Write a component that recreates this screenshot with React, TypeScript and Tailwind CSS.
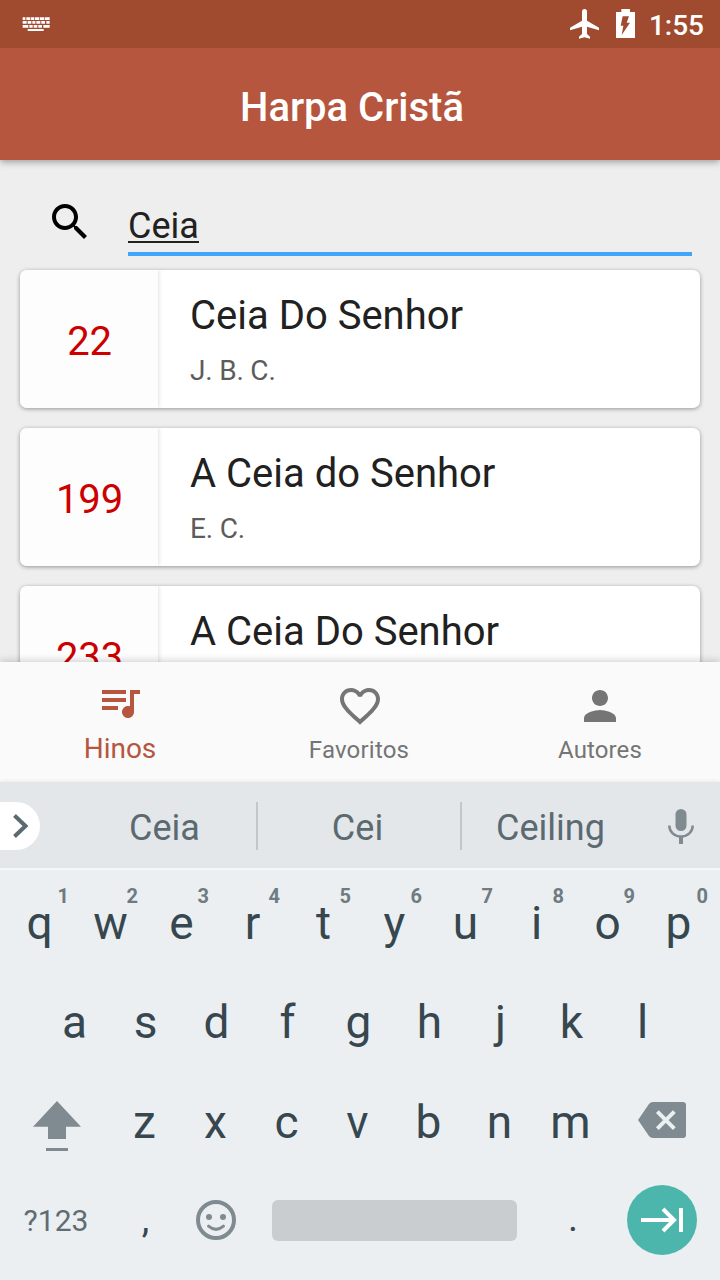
interface Hymn {
  number: number
  title: string
  author?: string
}

const HYMNS: Hymn[] = [
  { number: 22, title: 'Ceia Do Senhor', author: 'J. B. C.' },
  { number: 199, title: 'A Ceia do Senhor', author: 'E. C.' },
  { number: 233, title: 'A Ceia Do Senhor' },
]

const TOP_ROW = ['q', 'w', 'e', 'r', 't', 'y', 'u', 'i', 'o', 'p']
const MIDDLE_ROW = ['a', 's', 'd', 'f', 'g', 'h', 'j', 'k', 'l']
const BOTTOM_ROW = ['z', 'x', 'c', 'v', 'b', 'n', 'm']

function KeyboardIcon() {
  return (
    <svg width="28" height="15" viewBox="0 0 84 45" fill="#fff">
      <path d="M2 1h8v8H2zM13 1h12v8H13zM27 1h10v8H27zM39 1h13v8H39zM54 1h12v8H54zM68 1h15v8H68z" />
      <path d="M2 12h12v8H2zM17 12h11v8H17zM31 12h9v8h-9zM43 12h12v8H43zM58 12h11v8H58zM73 12h10v8H73z" />
      <path d="M2 24h17v8H2zM22 24h10v8H22zM35 24h11v8H35zM49 24h11v8H49zM64 24h19v8H64z" />
      <path d="M17 36h48v6H17z" />
    </svg>
  )
}

function StatusBar() {
  return (
    <div className="flex h-12 items-start bg-[#a04b2f] pl-[22px] pr-4">
      <div className="mt-4 pt-px">
        <KeyboardIcon />
      </div>
      <div className="ml-auto flex items-start">
        <svg className="mt-[9px]" width="29" height="30" viewBox="0 0 87 90" fill="#fff">
          <path d="M36 8Q36 0 43.500 0T51 8V35L87 56V64L51 53V75L60 83V89L43.500 85L27 89V83L36 75V53L0 64V56L36 35Z" />
        </svg>
        <svg className="ml-[17px] mt-[9px]" width="19" height="29" viewBox="0 0 57 87" fill="#fff" fillRule="evenodd">
          <path d="M16 0H42V9H57V87H0V9H16ZM20 22L14 50H22L17 78L42 41H32L39 22Z" />
        </svg>
        <span className="ml-[14px] mt-[9px] text-[28px] leading-[34px] font-medium text-white">1:55</span>
      </div>
    </div>
  )
}

function HymnCard({ hymn }: { hymn: Hymn }) {
  return (
    <li className="flex h-[138px] shrink-0 overflow-hidden rounded-[7px] bg-white shadow-[0_1px_4px_rgba(0,0,0,0.38)]">
      <div className="z-10 flex w-[138px] items-center justify-center bg-[#fdfdfd] pl-px pt-[6px] text-[40px] tracking-[-0.2px] text-[#cc0000] shadow-[1px_0_4px_rgba(0,0,0,0.12)]">
        {hymn.number}
      </div>
      <div className="pl-8 pt-[22px]">
        <p className="text-[40px] leading-[48px] text-[#212121]">{hymn.title}</p>
        {hymn.author && (
          <p className="mt-[15px] text-[28px] leading-8 tracking-[-0.2px] text-[#5c5c5c]">{hymn.author}</p>
        )}
      </div>
    </li>
  )
}

function BottomNav() {
  return (
    <nav className="relative z-20 flex h-[120px] shrink-0 bg-[#fafafa] shadow-[0_-1px_8px_rgba(0,0,0,0.2)]">
      <div className="flex flex-1 flex-col items-center pt-4 text-[#b6563e]">
        <svg className="size-12" viewBox="0 0 24 24" fill="currentColor">
          <path d="M15 6H3v2h12V6zm0 4H3v2h12v-2zM3 16h8v-2H3v2zM17 6v8.180c-.310-.110-.650-.180-1-.180-1.660 0-3 1.340-3 3s1.340 3 3 3 3-1.340 3-3V8h3V6h-5z" />
        </svg>
        <span className="mt-[7px] text-[28px] leading-8">Hinos</span>
      </div>
      <div className="flex flex-1 flex-col items-center pt-5 text-[#757575]">
        <svg className="size-12" viewBox="0 0 24 24" fill="currentColor">
          <path d="M16.500 3c-1.740 0-3.410.810-4.500 2.090C10.910 3.810 9.240 3 7.500 3 4.420 3 2 5.420 2 8.500c0 3.780 3.400 6.860 8.550 11.540L12 21.350l1.450-1.320C18.600 15.360 22 12.280 22 8.500 22 5.420 19.580 3 16.500 3zm-4.400 15.550l-.1.100-.1-.1C7.140 14.240 4 11.390 4 8.500 4 6.500 5.500 5 7.500 5c1.540 0 3.040.990 3.570 2.360h1.870C13.460 5.990 14.960 5 16.500 5c2 0 3.500 1.500 3.500 3.500 0 2.890-3.140 5.740-7.900 10.050z" />
        </svg>
        <span className="mt-[6px] pr-[2px] text-2xl leading-7 tracking-[0.2px]">Favoritos</span>
      </div>
      <div className="flex flex-1 flex-col items-center pt-5 text-[#757575]">
        <svg className="size-12" viewBox="0 0 24 24" fill="currentColor">
          <path d="M12 12c2.210 0 4-1.790 4-4s-1.790-4-4-4-4 1.790-4 4 1.790 4 4 4zm0 2c-2.670 0-8 1.340-8 4v2h16v-2c0-2.660-5.330-4-8-4z" />
        </svg>
        <span className="mt-[6px] text-2xl leading-7 tracking-[0.1px]">Autores</span>
      </div>
    </nav>
  )
}

function Suggestions() {
  return (
    <div className="flex h-[88px] items-center border-b-2 border-[#f5f7f8] bg-[#e3e7ea] pt-[2px] text-4xl text-[#5b6a71]">
      <div className="flex h-12 w-10 items-center rounded-r-full bg-white pl-3">
        <svg width="18" height="26" viewBox="0 0 18 26" fill="none" stroke="#5b6a71" strokeWidth="4">
          <path d="M2.500 2.500L13.500 13L2.500 23.500" />
        </svg>
      </div>
      <span className="ml-8 w-[184px] pt-1 pl-px text-center">Ceia</span>
      <span className="h-12 w-[2px] bg-[#c2c7ca]" />
      <span className="w-[202px] pt-1 pr-[3px] text-center">Cei</span>
      <span className="h-12 w-[2px] bg-[#c2c7ca]" />
      <span className="w-[178px] pt-1 pr-px text-center">Ceiling</span>
      <svg className="ml-7 mt-[2px]" width="26" height="36" viewBox="0 0 26 36" fill="none" stroke="#7f8b91">
        <rect x="7.500" y="0" width="11" height="22" rx="5.500" fill="#7f8b91" stroke="none" />
        <path d="M1.300 16.500c0 6.500 5 11 11.700 11s11.700-4.500 11.700-11" strokeWidth="2.500" />
        <path d="M13 27.500V35" strokeWidth="4" />
      </svg>
    </div>
  )
}

function LetterKey({ label, hint }: { label: string; hint?: number }) {
  return (
    <div className="relative flex h-full w-[71px] items-center justify-center">
      {label}
      {hint !== undefined && (
        <span
          className={`absolute top-[11px] text-xl leading-6 font-bold text-[#6f7b81] ${
            hint < 2 ? 'right-[6px]' : 'right-[8px]'
          }`}
        >
          {hint}
        </span>
      )}
    </div>
  )
}

function Keyboard() {
  return (
    <div className="relative z-30 h-[498px] shrink-0 bg-[#ebeff2] shadow-[0_0_4px_rgba(0,0,0,0.1)]">
      <Suggestions />
      <div className="pt-[3px] text-[46px] leading-none text-[#37474f]">
        <div className="flex h-[99px] pl-1">
          {TOP_ROW.map((key, i) => (
            <LetterKey key={key} label={key} hint={(i + 1) % 10} />
          ))}
        </div>
        <div className="flex h-[99px] pl-[39px]">
          {MIDDLE_ROW.map((key) => (
            <LetterKey key={key} label={key} />
          ))}
        </div>
        <div className="flex h-[100px] items-center pt-px">
          <div className="flex w-[109px] justify-center pl-1 pt-[9px]">
            <svg width="48" height="50" viewBox="0 0 144 150" fill="#7f8b91">
              <path d="M72 0L144 77H99V114H45V77H0ZM39 141H105V150H39Z" />
            </svg>
          </div>
          {BOTTOM_ROW.map((key) => (
            <LetterKey key={key} label={key} />
          ))}
          <div className="flex flex-1 justify-center pb-1 pr-[2px]">
            <svg width="48" height="36" viewBox="0 0 144 108">
              <path d="M45 0H134Q144 0 144 10V98Q144 108 134 108H45Q37 108 33 102L0 54L33 6Q37 0 45 0Z" fill="#7f8b91" />
              <path d="M58 29L109 80M109 29L58 80" stroke="#ebeff2" strokeWidth="12" />
            </svg>
          </div>
        </div>
        <div className="flex h-[98px] items-center">
          <span className="w-28 pt-[2px] text-center text-[30px] text-[#5f6c72]">?123</span>
          <span className="w-[67px] pb-[2px] text-center text-[38px]">,</span>
          <svg className="ml-[17px]" width="40" height="40" viewBox="0 0 40 40" fill="none" stroke="#7f8b91">
            <circle cx="20" cy="20" r="18" strokeWidth="4" />
            <circle cx="13" cy="17" r="3" fill="#7f8b91" stroke="none" />
            <circle cx="27" cy="17" r="3" fill="#7f8b91" stroke="none" />
            <path d="M12.500 26.200Q20 32.500 27.500 26.200" strokeWidth="3" strokeLinecap="round" />
          </svg>
          <span className="ml-9 mt-px h-[41px] w-[245px] rounded-[6px] bg-[#c9cdd0]" />
          <span className="w-28 pb-1 text-center text-[38px]">.</span>
          <div className="-ml-[2px] flex size-[70px] items-center justify-center rounded-full bg-[#4db6ac]">
            <svg width="44" height="26" viewBox="0 0 44 26" fill="none" stroke="#fff" strokeWidth="4">
              <path d="M1 13H34M23 2L34 13L23 24M41 1V25" />
            </svg>
          </div>
        </div>
      </div>
    </div>
  )
}

export default function App() {
  return (
    <div className="flex h-[1280px] w-[720px] flex-col overflow-hidden bg-[#eeeeee] font-[Roboto,sans-serif]">
      <header className="relative z-20 h-40 shrink-0 shadow-[0_2px_7px_rgba(0,0,0,0.35)]">
        <StatusBar />
        <div className="flex h-28 items-center justify-center bg-[#b6563e] pr-4 pt-2">
          <h1 className="text-[40px] leading-[60px] font-medium text-white">Harpa Cristã</h1>
        </div>
      </header>
      <main className="min-h-0 flex-1 overflow-hidden">
        <div className="flex h-[110px] pl-[46px] pr-7">
          <svg className="mt-[38px] size-12" viewBox="0 0 24 24" fill="#000">
            <path d="M15.500 14h-.790l-.280-.270C15.410 12.590 16 11.110 16 9.500 16 5.910 13.090 3 9.500 3S3 5.910 3 9.500 5.910 16 9.500 16c1.610 0 3.090-.590 4.230-1.570l.270.280v.790l5 4.990L20.490 19l-4.990-5zm-6 0C7.010 14 5 11.990 5 9.500S7.010 5 9.500 5 14 7.010 14 9.500 11.990 14 9.500 14z" />
          </svg>
          <div className="ml-[34px] h-24 flex-1 border-b-4 border-[#42a5f9] pt-[45px]">
            <span className="inline-block h-[38px] border-b-2 border-[#212121] text-4xl leading-[42px] text-[#212121]">Ceia</span>
          </div>
        </div>
        <ul className="flex flex-col gap-5 px-5">
          {HYMNS.map((hymn) => (
            <HymnCard key={hymn.number} hymn={hymn} />
          ))}
        </ul>
      </main>
      <BottomNav />
      <Keyboard />
    </div>
  )
}
